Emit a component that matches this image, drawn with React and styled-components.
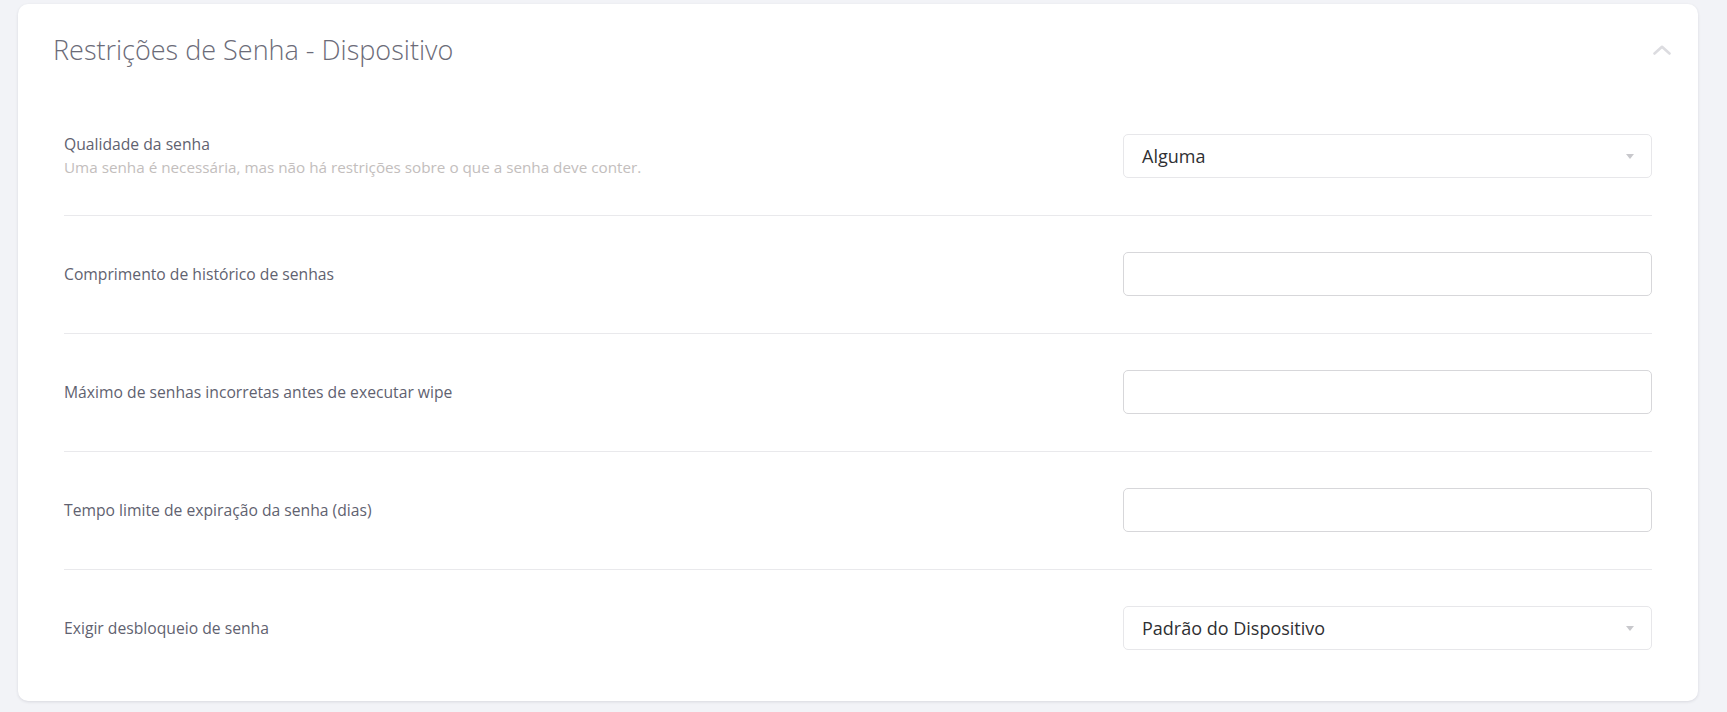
import React, { useState } from 'react';
import styled, { createGlobalStyle } from 'styled-components';

const GlobalStyle = createGlobalStyle`
  html, body {
    margin: 0;
    padding: 0;
    background: #f2f3f7;
    font-family: "Open Sans", "Noto Sans", sans-serif;
  }
`;

const Page = styled.div`
  padding: 4px 29px 12px 18px;
`;

const Card = styled.section`
  background: #fff;
  border-radius: 10px;
  box-shadow: 0 1px 3px rgba(30, 35, 60, 0.12);
  padding-bottom: 14px;
`;

const Header = styled.header`
  display: flex;
  align-items: center;
  justify-content: space-between;
  padding: 28px 27px 28px 35px;
`;

const Title = styled.h2`
  margin: 0;
  font-size: 27px;
  line-height: 36px;
  font-weight: 300;
  color: #6b6b78;
`;

const CollapseButton = styled.button`
  border: none;
  background: none;
  padding: 0;
  width: 18px;
  height: 18px;
  display: flex;
  align-items: center;
  justify-content: center;
  cursor: pointer;
`;

const Body = styled.div`
  padding: 0 46px;
`;

const Row = styled.div`
  display: flex;
  align-items: center;
  justify-content: space-between;
  padding: 36px 0 37px;
  border-bottom: 1px solid #e9e9ec;

  &:first-child {
    padding-top: 38px;
  }

  &:last-child {
    border-bottom: none;
  }
`;

const LabelBlock = styled.div`
  display: flex;
  flex-direction: column;
  gap: 2px;
`;

const Label = styled.span`
  font-size: 15.7px;
  line-height: 21px;
  color: #5f6270;
`;

const Hint = styled.span`
  font-size: 15.25px;
  line-height: 21px;
  color: #c3bebd;
`;

const Control = styled.div`
  width: 529px;
`;

const TextInput = styled.input`
  box-sizing: border-box;
  width: 100%;
  height: 44px;
  border: 1px solid #d7d7da;
  border-radius: 5px;
  padding: 0 18px;
  font-family: inherit;
  font-size: 18px;
  color: #333;
  outline: none;
`;

const SelectBox = styled.div`
  box-sizing: border-box;
  height: 44px;
  border: 1px solid #e7e7ea;
  border-radius: 5px;
  padding: 0 17px 0 18px;
  display: flex;
  align-items: center;
  justify-content: space-between;
  font-size: 18px;
  color: #2f3033;
  cursor: pointer;
`;

const Caret = styled.span`
  width: 0;
  height: 0;
  border-left: 4.5px solid transparent;
  border-right: 4.5px solid transparent;
  border-top: 5.5px solid #c8c8cc;
`;

const rows = [
  { label: 'Qualidade da senha', hint: 'Uma senha é necessária, mas não há restrições sobre o que a senha deve conter.', type: 'select', value: 'Alguma' },
  { label: 'Comprimento de histórico de senhas', type: 'input' },
  { label: 'Máximo de senhas incorretas antes de executar wipe', type: 'input' },
  { label: 'Tempo limite de expiração da senha (dias)', type: 'input' },
  { label: 'Exigir desbloqueio de senha', type: 'select', value: 'Padrão do Dispositivo' },
];

const App = () => {
  const [open, setOpen] = useState(true);

  return (
    <>
      <GlobalStyle />
      <Page>
        <Card>
          <Header>
            <Title>Restrições de Senha - Dispositivo</Title>
            <CollapseButton onClick={() => setOpen(!open)}>
              <svg width="18" height="10" viewBox="0 0 18 10" fill="none">
                <path d="M1.5 8.5 L9 1.8 L16.5 8.5" stroke="#dcdce0" strokeWidth="2.6" strokeLinecap="round" strokeLinejoin="round" />
              </svg>
            </CollapseButton>
          </Header>
          {open && (
            <Body>
              {rows.map((r) => (
                <Row key={r.label}>
                  <LabelBlock>
                    <Label>{r.label}</Label>
                    {r.hint && <Hint>{r.hint}</Hint>}
                  </LabelBlock>
                  <Control>
                    {r.type === 'select' ? (
                      <SelectBox>
                        <span>{r.value}</span>
                        <Caret />
                      </SelectBox>
                    ) : (
                      <TextInput type="text" />
                    )}
                  </Control>
                </Row>
              ))}
            </Body>
          )}
        </Card>
      </Page>
    </>
  );
};

export default App;
